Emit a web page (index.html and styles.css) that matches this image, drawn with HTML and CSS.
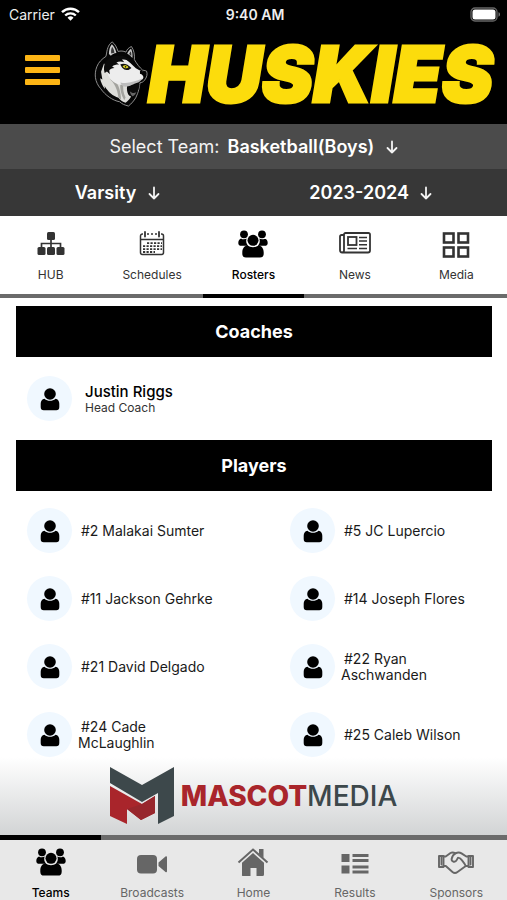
FILE: index.html
```html
<!DOCTYPE html>
<html lang="en">
  <head>
    <meta charset="UTF-8" />
    <meta name="viewport" content="width=device-width, initial-scale=1.0" />
    <title>Huskies - Rosters</title>
    <link rel="stylesheet" href="styles.css" />
  </head>
  <body>
    <!-- Shared icons -->
    <svg class="sprite" aria-hidden="true">
      <symbol id="icon-user" viewBox="0 0 20 24">
        <path d="M4.500 11.800C6 13.200 8 13.800 10 13.800s4-.6 5.500-2c2.600.5 3.800 2.300 3.800 5v3.200c0 2.100-1.100 3.300-3 3.300H3.700c-1.900 0-3-1.200-3-3.300v-3.200c0-2.700 1.200-4.500 3.800-5z" />
        <circle cx="10" cy="7" r="5.800" />
      </symbol>
      <symbol id="icon-team" viewBox="0 0 30 28">
        <circle cx="6" cy="4.300" r="3.900" />
        <circle cx="24" cy="4.300" r="3.900" />
        <path d="M3 8.500c1.600 1.100 4 1.100 5.600.1-.9 2.800-.3 5.400 1.600 7.200H3.200C1.300 15.800.3 14.700.3 12.900c0-2 .9-3.700 2.700-4.400z" />
        <path d="M27 8.500c-1.600 1.100-4 1.100-5.600.1.900 2.800.3 5.400-1.600 7.200h7c1.900 0 2.900-1.100 2.900-2.900 0-2-.9-3.700-2.700-4.400z" />
        <circle cx="15" cy="10.300" r="5.500" />
        <path d="M9.300 15.200c3.300 2.600 8.100 2.600 11.400 0 3.200.7 5 3.500 5 7.200v1.300c0 2.600-1.400 3.900-3.700 3.900H8c-2.300 0-3.700-1.300-3.700-3.900v-1.300c0-3.700 1.800-6.500 5-7.200z" />
      </symbol>
      <symbol id="icon-arrow" viewBox="0 0 12 14">
        <path d="M6 1.500v11M1.500 8L6 12.500 10.500 8" fill="none" stroke="currentColor" stroke-width="1.800" stroke-linecap="round" stroke-linejoin="round" />
      </symbol>
    </svg>

    <div class="app">
      <div class="status-bar">
        <div class="status-carrier">
          <span>Carrier</span>
          <svg width="19" height="14" viewBox="0 0 19 14" aria-hidden="true">
            <g fill="none" stroke="#fff" stroke-width="2.400">
              <path d="M1 5.200a12.200 12.200 0 0 1 17 0" />
              <path d="M4.200 8.500a7.600 7.600 0 0 1 10.600 0" />
            </g>
            <path d="M9.500 13.700L6.500 10.700a4.300 4.300 0 0 1 6 0z" fill="#fff" />
          </svg>
        </div>
        <span class="status-time">9:40 AM</span>
        <div class="status-battery">
          <svg width="31" height="15" viewBox="0 0 31 15" aria-hidden="true">
            <rect x="1" y="1" width="26" height="13" rx="4" fill="none" stroke="#666" stroke-width="1.300" />
            <rect x="2.500" y="2.500" width="23" height="10" rx="2.500" fill="#fff" />
            <path d="M28.500 5.300c2 .6 2 3.800 0 4.400z" fill="#777" />
          </svg>
        </div>
      </div>

      <header class="header">
        <button class="menu-btn" type="button" aria-label="Menu">
          <span></span>
          <span></span>
          <span></span>
        </button>
        <div class="brand">
          <svg class="brand-logo" viewBox="12 10 164 208" aria-hidden="true">
            <!-- head outline -->
            <path d="M50 50C52 34 58 21 67 16c9 6 14 17 18 29 8-2 16-2 24 2 3-8 9-14 17-17 8 11 10 26 9 40 8 14 16 24 25 32l12 3c4 8 1 20-6 28-4 6-9 7-14 8-2 14-4 28-13 46-6 9-12 17-22 25-12-3-20-6-27-13-22-4-44-20-58-40C13 138 12 113 20 92c5-14 16-24 28-32z" fill="#060606" stroke="#8f8f8f" stroke-width="3" />
            <!-- ears -->
            <path d="M57 53c0-12 3-23 9-30 7 6 11 15 14 27-8 1-13 4-17 8z" fill="#cfcfcf" />
            <path d="M64 51c-1-9 0-14 3-20 4 6 6 11 7 18z" fill="#3a3a3a" />
            <path d="M113 52c3-7 7-12 12-15 4 9 5 18 4 28-5-6-10-10-16-13z" fill="#c4c4c4" />
            <path d="M119 53c1-4 3-7 5-8 2 5 2 9 1 14z" fill="#333" />
            <!-- neck fur -->
            <path d="M42 82l-9 25 4 24-7-4c2 12 8 24 15 33l-1-9c10 18 26 31 42 36 6 8 14 13 22 15 8-5 13-12 17-19-8-3-11-9-12-17-2-12 0-20 4-28L80 110z" fill="#dededa" />
            <path d="M60 130c14 12 23 30 26 55l8 8c0-24-7-45-18-58zM92 140c-2 20 2 37 12 54l4-8c-7-14-9-28-6-42z" fill="#a3a39e" />
            <!-- cheek and muzzle -->
            <path d="M52 78c8-10 18-15 30-16 14-1 24 3 33 12 12 9 20 21 34 28l14 6c3 8 1 17-3 22-14 7-29 11-43 14-15 5-28 4-39-2-15-6-26-24-27-42z" fill="#ededed" />
            <path d="M92 140c23 5 44-3 67-12-4 8-9 11-15 13-12 3-22 12-37 12-8-1-13-6-15-13z" fill="#bdbdbd" />
            <!-- dark mask -->
            <path d="M47 76c13-16 34-22 55-17 10 3 20 11 24 19-12-7-20-10-29-8l7 8c-10-4-17-3-24 1l8 6c-10 0-16 2-21 6l7 5c-8 1-13 3-16 7l2 12-9-9-7 5c-4-14-2-25 3-35z" fill="#0b0b0b" />
            <path d="M92 84c11-4 23-1 34 12l-9 6c-11 1-20-4-25-18z" fill="#141414" />
            <path d="M99 90c6-4 12-3 18 3-5 5-13 4-18-3z" fill="#e9dd20" />
            <circle cx="108" cy="92" r="2.500" fill="#111" />
            <!-- nose and mouth -->
            <path d="M152 104l18 3c2 7 0 14-6 19-2-7-5-11-12-13z" fill="#050505" />
            <path d="M114 154c10-1 19-7 28-10l9 1c-4 20-9 34-22 40-11-5-16-17-15-31z" fill="#0b0b0b" />
            <path d="M121 167c6 6 13 7 20 3-3 7-7 11-12 12-4-3-7-8-8-15z" fill="#666" />
          </svg>
          <h1 class="brand-name">HUSKIES</h1>
        </div>
      </header>

      <div class="team-bar">
        <label for="team">Select Team:</label>
        <span class="picker">
          <select id="team">
            <option>Basketball(Boys)</option>
          </select>
          <svg class="arrow"><use href="#icon-arrow" /></svg>
        </span>
      </div>
      <div class="season-bar">
        <span class="picker">
          <select id="level" aria-label="Level">
            <option>Varsity</option>
          </select>
          <svg class="arrow"><use href="#icon-arrow" /></svg>
        </span>
        <span class="picker">
          <select id="season" aria-label="Season">
            <option>2023-2024</option>
          </select>
          <svg class="arrow"><use href="#icon-arrow" /></svg>
        </span>
      </div>

      <nav class="tabs" aria-label="Team pages">
        <a href="#hub" class="tab">
          <svg width="28" height="28" viewBox="0 0 28 28" fill="currentColor" aria-hidden="true">
            <rect x="10" y="2" width="8" height="8" rx="1.500" />
            <path d="M14 9v9M4.500 18v-4.500h19V18" fill="none" stroke="currentColor" stroke-width="1.700" />
            <rect x="0.500" y="17" width="8" height="8" rx="1.500" />
            <rect x="10" y="17" width="8" height="8" rx="1.500" />
            <rect x="19.500" y="17" width="8" height="8" rx="1.500" />
          </svg>
          <span>HUB</span>
        </a>
        <a href="#schedules" class="tab">
          <svg width="28" height="28" viewBox="0 0 28 28" fill="none" stroke="currentColor" aria-hidden="true">
            <path d="M5 4H4.500a2 2 0 0 0-2 2v16.500a2 2 0 0 0 2 2h19a2 2 0 0 0 2-2V6a2 2 0 0 0-2-2H23M9 4h2M13 4h2M17 4h2M2.500 9.500h23" stroke-width="1.500" />
            <path d="M7 2v4.500M21 2v4.500" stroke-width="1.800" stroke-linecap="round" />
            <path d="M9 13.200h15M5 16.200h19M5 19.200h19M5 22h12" stroke-width="1.800" stroke-dasharray="2.200 1.300" />
          </svg>
          <span>Schedules</span>
        </a>
        <a href="#rosters" class="tab active" aria-current="page">
          <svg class="team-icon"><use href="#icon-team" /></svg>
          <span>Rosters</span>
        </a>
        <a href="#news" class="tab">
          <svg width="32" height="28" viewBox="0 0 32 28" fill="none" stroke="currentColor" stroke-width="1.800" aria-hidden="true">
            <path d="M5 4.500a1.500 1.500 0 0 1 1.500-1.500h23A1.500 1.500 0 0 1 31 4.500v16a2 2 0 0 1-2 2H3.200A2.200 2.200 0 0 1 1 20.300V6.500A1.500 1.500 0 0 1 2.500 5H5v15.500a2 2 0 0 1-2 2" />
            <rect x="9" y="7" width="8.500" height="8" />
            <path d="M20 7.500h8M20 11h8M20 14.800h8M8.500 18.500H18M20 18.500h8" stroke-width="1.500" />
          </svg>
          <span>News</span>
        </a>
        <a href="#media" class="tab">
          <svg width="28" height="28" viewBox="0 0 28 28" fill="none" stroke="currentColor" stroke-width="2.600" aria-hidden="true">
            <rect x="2" y="3.500" width="9.500" height="9" />
            <rect x="16.500" y="3.500" width="9.500" height="9" />
            <rect x="2" y="17.500" width="9.500" height="9" />
            <rect x="16.500" y="17.500" width="9.500" height="9" />
          </svg>
          <span>Media</span>
        </a>
      </nav>

      <main class="roster">
        <h2 class="section-title">Coaches</h2>
        <div class="coach">
          <span class="avatar"><svg><use href="#icon-user" /></svg></span>
          <div class="coach-info">
            <p class="coach-name">Justin Riggs</p>
            <p class="coach-role">Head Coach</p>
          </div>
        </div>

        <h2 class="section-title">Players</h2>
        <ul class="players">
          <li class="player">
            <span class="avatar"><svg><use href="#icon-user" /></svg></span>
            <span class="player-name">#2 Malakai Sumter</span>
          </li>
          <li class="player">
            <span class="avatar"><svg><use href="#icon-user" /></svg></span>
            <span class="player-name">#5 JC Lupercio</span>
          </li>
          <li class="player">
            <span class="avatar"><svg><use href="#icon-user" /></svg></span>
            <span class="player-name">#11 Jackson Gehrke</span>
          </li>
          <li class="player">
            <span class="avatar"><svg><use href="#icon-user" /></svg></span>
            <span class="player-name">#14 Joseph Flores</span>
          </li>
          <li class="player">
            <span class="avatar"><svg><use href="#icon-user" /></svg></span>
            <span class="player-name">#21 David Delgado</span>
          </li>
          <li class="player">
            <span class="avatar"><svg><use href="#icon-user" /></svg></span>
            <span class="player-name">#22 Ryan Aschwanden</span>
          </li>
          <li class="player">
            <span class="avatar"><svg><use href="#icon-user" /></svg></span>
            <span class="player-name">#24 Cade McLaughlin</span>
          </li>
          <li class="player">
            <span class="avatar"><svg><use href="#icon-user" /></svg></span>
            <span class="player-name">#25 Caleb Wilson</span>
          </li>
        </ul>
      </main>

      <a href="#sponsor" class="sponsor">
        <svg width="64" height="58" viewBox="0 0 64 58" aria-hidden="true">
          <path d="M0 0l32 18L64 0v49l-16 8V26L32 35 0 16z" fill="#3d484b" />
          <path d="M0 19l32 18 13-8v17l-14 7-14-11v15L0 49z" fill="#a9252b" />
          <path d="M32 37l13-8v17l-14 7-14-11z" fill="#97262c" />
        </svg>
        <span class="sponsor-name"><b>MASCOT</b>MEDIA</span>
      </a>

      <nav class="tabs bottom-tabs" aria-label="Main">
        <a href="#teams" class="tab active" aria-current="page">
          <svg class="team-icon"><use href="#icon-team" /></svg>
          <span>Teams</span>
        </a>
        <a href="#broadcasts" class="tab">
          <svg width="32" height="28" viewBox="0 0 32 28" fill="currentColor" aria-hidden="true">
            <rect x="1" y="7" width="20" height="18.500" rx="4" />
            <path d="M22.500 14.500l7-6c.8-.6 1.500-.3 1.500.7v14c0 1-.7 1.400-1.500.7l-7-6z" />
          </svg>
          <span>Broadcasts</span>
        </a>
        <a href="#home" class="tab">
          <svg width="32" height="32" viewBox="0 0 32 32" fill="currentColor" aria-hidden="true">
            <path d="M1.500 18.500L16 5.500l14.500 13" fill="none" stroke="currentColor" stroke-width="2" />
            <path d="M22 5h4.500v9L22 10zM16 9l11 9.800V30.500a1.500 1.500 0 0 1-1.500 1.500H19.500V24h-6v8h-6A1.500 1.500 0 0 1 5 30.500V18.800z" />
          </svg>
          <span>Home</span>
        </a>
        <a href="#results" class="tab">
          <svg width="28" height="28" viewBox="0 0 28 28" fill="currentColor" aria-hidden="true">
            <rect x="0.500" y="6" width="8" height="8" />
            <rect x="0.500" y="17.500" width="8" height="8" />
            <rect x="11.500" y="6" width="16" height="3" />
            <rect x="11.500" y="11" width="16" height="3" />
            <rect x="11.500" y="17.500" width="16" height="3" />
            <rect x="11.500" y="22.500" width="16" height="3" />
          </svg>
          <span>Results</span>
        </a>
        <a href="#sponsors" class="tab">
          <svg width="36" height="28" viewBox="0 0 36 28" fill="none" stroke="currentColor" stroke-width="1.900" stroke-linejoin="round" stroke-linecap="round" aria-hidden="true">
            <path d="M1 8h4.500v11H1zM30.500 8H35v11h-4.500z" />
            <path d="M3.500 8.500v8M32.500 8.500v8" />
            <path d="M5.500 8.500h2.200L12.500 5c1.500-.8 3-.7 5 .4 2.200-1.200 4.200-1.200 6 0l4.800 3.100h2.200M5.500 18h2.300l6.700 6c1.600 1.300 3.300 1.300 5 0l8.300-6h2.700" />
            <path d="M17.500 5.400c-2 1-3.300 3.100-3.900 5.500-.2 3.200 3.800 4 5.200 1l1.200-2.300c2 0 2.700 1 3.600 2.300 2 2.500 3.300 4 4.200 6.100" />
          </svg>
          <span>Sponsors</span>
        </a>
      </nav>
    </div>
  </body>
</html>
```
FILE: styles.css
```css
* {
  box-sizing: border-box;
}

body {
  margin: 0;
  font-family: Inter, "Liberation Sans", sans-serif;
  background-color: #fff;
  color: #1a1a1a;
}

h1,
h2,
p,
ul {
  margin: 0;
  padding: 0;
}

a {
  color: inherit;
  text-decoration: none;
}

.sprite {
  display: none;
}

.app {
  display: flex;
  flex-direction: column;
  height: 100vh;
}

/* Status bar */
.status-bar {
  display: grid;
  grid-template-columns: 1fr auto 1fr;
  align-items: center;
  padding: 0 6px 0 9px;
  height: 28px;
  background-color: #000;
  color: #eee;
  font-size: 14px;
}

.status-carrier {
  display: flex;
  align-items: center;
  gap: 6px;
}

.status-time {
  font-weight: 600;
}

.status-battery {
  display: flex;
  justify-content: flex-end;
}

/* Header */
.header {
  display: flex;
  align-items: center;
  justify-content: space-between;
  height: 96px;
  padding: 0 14px 12px 25px;
  background-color: #000;
}

.menu-btn {
  display: flex;
  flex-direction: column;
  gap: 6px;
  width: 35px;
  padding: 0;
  border: none;
  background: none;
  cursor: pointer;
}

.menu-btn span {
  height: 6px;
  border-radius: 1px;
  background-color: #fdb515;
}

.brand {
  display: flex;
  align-items: center;
  padding-top: 8px;
}

.brand-logo {
  width: 54px;
  height: 68px;
}

.brand-name {
  font-size: 77px;
  font-weight: 900;
  font-style: italic;
  line-height: 76px;
  color: #fcdc0c;
  -webkit-text-stroke: 3px #fcdc0c;
}

/* Team and season pickers */
.team-bar,
.season-bar {
  display: flex;
  align-items: center;
  color: #f4f4f4;
  font-size: 18px;
}

.team-bar {
  justify-content: center;
  gap: 8px;
  height: 45px;
  background-color: #4b4b4b;
}

.season-bar {
  justify-content: space-around;
  height: 47px;
  background-color: #373737;
}

.picker {
  display: flex;
  align-items: center;
  gap: 11px;
}

.picker select {
  appearance: none;
  padding: 0;
  border: none;
  background: none;
  color: #fff;
  font: inherit;
  font-weight: 600;
  cursor: pointer;
}

.arrow {
  width: 12px;
  height: 14px;
}

/* Icon tabs, used at the top and the bottom */
.tabs {
  display: grid;
  grid-template-columns: repeat(5, 1fr);
  flex-shrink: 0;
}

.tab {
  display: flex;
  flex-direction: column;
  align-items: center;
  justify-content: flex-end;
  gap: 9px;
  padding: 14px 0 12px;
  border-bottom: 4px solid #6b6b6b;
  color: #333;
  font-size: 12px;
  line-height: 15px;
}

.tab.active {
  border-color: #000;
  color: #000;
}

.tab.active span {
  font-weight: 500;
}

.team-icon {
  width: 30px;
  height: 28px;
  fill: currentColor;
}

.bottom-tabs {
  background-color: #e8e8e8;
}

.bottom-tabs .tab {
  padding: 4px 0 0;
  border-top: 5px solid #6b6b6b;
  border-bottom: none;
  color: #666;
}

.bottom-tabs .tab.active {
  border-color: #000;
  color: #000;
}

/* Roster */
.roster {
  flex: 1;
  min-height: 0;
  padding: 8px 15px 0 16px;
  overflow-y: auto;
  scrollbar-width: none;
}

.section-title {
  background-color: #000;
  color: #fff;
  font-size: 18px;
  font-weight: 700;
  line-height: 51px;
  text-align: center;
}

.avatar {
  display: flex;
  flex-shrink: 0;
  align-items: center;
  justify-content: center;
  width: 45px;
  height: 45px;
  border-radius: 50%;
  background-color: #f0f8ff;
}

.avatar svg {
  width: 20px;
  height: 24px;
  fill: #000;
}

.coach {
  display: flex;
  align-items: center;
  gap: 13px;
  padding: 19px 11px;
}

.coach-name {
  color: #000;
  font-size: 15px;
  font-weight: 500;
  line-height: 18px;
}

.coach-role {
  color: #333;
  font-size: 12px;
  line-height: 14px;
}

.players {
  display: grid;
  grid-template-columns: 1fr 1fr;
  gap: 23px 72px;
  padding: 17px 11px 0;
  list-style: none;
}

.player {
  display: flex;
  align-items: center;
  gap: 6px;
}

.player-name {
  font-size: 14px;
  line-height: 16px;
  text-indent: 3px;
}

/* Sponsor banner */
.sponsor {
  display: flex;
  flex-shrink: 0;
  align-items: center;
  justify-content: center;
  gap: 7px;
  height: 78px;
  background: linear-gradient(#fff, #d2d4d5);
}

.sponsor-name {
  color: #3d484b;
  font-size: 28px;
  font-weight: 500;
}

.sponsor-name b {
  color: #a9252b;
  font-weight: 800;
}
```
